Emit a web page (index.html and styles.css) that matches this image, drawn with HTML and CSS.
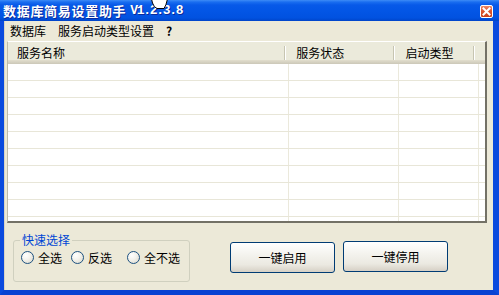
FILE: index.html
```html
<!DOCTYPE html>
<html lang="zh-CN">
<head>
    <meta charset="UTF-8">
    <meta name="viewport" content="width=device-width, initial-scale=1.0">
    <title>数据库简易设置助手</title>
    <link rel="stylesheet" href="styles.css">
</head>
<body>
    <div class="window">
        <div class="titlebar">
            <span class="title-cn">数据库简易设置助手</span>
            <span class="title-ver">V1.2.3.8</span>
            <span class="close-btn">
                <svg width="11" height="11" viewBox="0 0 11 11">
                    <path d="M2.5 2.5 L8.5 8.5 M8.5 2.5 L2.5 8.5" stroke="#fff" stroke-width="2" stroke-linecap="square"/>
                </svg>
            </span>
        </div>

        <!-- mouse pointer caught in the screenshot -->
        <svg class="cursor" width="20" height="10" viewBox="0 0 20 10">
            <path d="M1.5 -1 L2.5 3 Q4 7.5 7 8.5 L14 8.5 Q16 6 17.5 -1 Z" fill="#fff" stroke="#000" stroke-width="1"/>
        </svg>

        <div class="frame">
            <div class="menubar">
                <span class="menu-item">数据库</span>
                <span class="menu-item">服务启动类型设置</span>
                <span class="menu-item help">?</span>
            </div>

            <div class="listview">
                <div class="list-header">
                    <div class="col col-name">服务名称</div>
                    <div class="col col-state">服务状态</div>
                    <div class="col col-type">启动类型</div>
                    <div class="col col-fill"></div>
                </div>
                <div class="list-body">
                    <div class="row"><div class="cell col-name"></div><div class="cell col-state"></div><div class="cell col-type"></div></div>
                    <div class="row"><div class="cell col-name"></div><div class="cell col-state"></div><div class="cell col-type"></div></div>
                    <div class="row"><div class="cell col-name"></div><div class="cell col-state"></div><div class="cell col-type"></div></div>
                    <div class="row"><div class="cell col-name"></div><div class="cell col-state"></div><div class="cell col-type"></div></div>
                    <div class="row"><div class="cell col-name"></div><div class="cell col-state"></div><div class="cell col-type"></div></div>
                    <div class="row"><div class="cell col-name"></div><div class="cell col-state"></div><div class="cell col-type"></div></div>
                    <div class="row"><div class="cell col-name"></div><div class="cell col-state"></div><div class="cell col-type"></div></div>
                    <div class="row"><div class="cell col-name"></div><div class="cell col-state"></div><div class="cell col-type"></div></div>
                    <div class="row"><div class="cell col-name"></div><div class="cell col-state"></div><div class="cell col-type"></div></div>
                    <div class="row"><div class="cell col-name"></div><div class="cell col-state"></div><div class="cell col-type"></div></div>
                </div>
            </div>

            <div class="bottom">
                <fieldset class="quick">
                    <legend>快速选择</legend>
                    <label class="radio r-all"><span class="dot"></span>全选</label>
                    <label class="radio r-invert"><span class="dot"></span>反选</label>
                    <label class="radio r-none"><span class="dot"></span>全不选</label>
                </fieldset>
                <button class="btn">一键启用</button>
                <button class="btn">一键停用</button>
            </div>
        </div>
    </div>
</body>
</html>
```

FILE: styles.css
```css
body {
    margin: 0;
    font-family: "Noto Sans CJK SC", sans-serif;
    font-size: 12px;
    color: #000;
    background-color: #fff;
}

.window {
    position: relative;
    width: 499px;
    height: 295px;
    display: flex;
    flex-direction: column;
    overflow: hidden;
}

/* title bar */
.titlebar {
    height: 21px;
    flex-shrink: 0;
    display: flex;
    align-items: flex-start;
    padding-left: 3px;
    background: linear-gradient(to bottom, #3d8cf6 0, #1a6ef0 2px, #0759e8 5px, #0356e6 50%, #0152e0 85%, #0044c9 100%);
    color: #fff;
    font-weight: bold;
    line-height: 21px;
    text-shadow: 1px 1px 0 #0b2a9a;
}

.title-cn {
    font-size: 13px;
    letter-spacing: 0.7px;
}

.title-ver {
    margin-left: 4px;
    font-family: "Liberation Mono", monospace;
    font-size: 13px;
    letter-spacing: -1.3px;
}

.close-btn {
    margin-left: auto;
    margin-right: 6px;
    margin-top: 5px;
    width: 11px;
    height: 11px;
    border: 1px solid #fff;
    border-radius: 2px;
    background: linear-gradient(to bottom, #ee8a66, #dc5630 45%, #c9401b);
    display: flex;
}

.cursor {
    position: absolute;
    left: 150px;
    top: 0;
}

/* window body */
.frame {
    flex: 1;
    display: flex;
    flex-direction: column;
    background-color: #ece9d8;
    border-left: 4px solid #0a4ade;
    border-right: 6px solid #0a4ade;
    border-bottom: 5px solid #0842d2;
    box-shadow: inset 1px 0 0 #d8d4c4;
}

.menubar {
    height: 19px;
    line-height: 19px;
    display: flex;
}

.menu-item {
    padding: 0 6px;
}

.help {
    font-weight: bold;
}

/* list view */
.listview {
    margin: 1px 6px 0 3px;
    height: 179px;
    background-color: #fff;
    border-left: 1px solid #bdbaa9;
    border-top: 1px solid #fff;
    border-right: 2px solid #737166;
    border-bottom: 2px solid #737166;
    overflow: hidden;
}

.list-header {
    height: 22px;
    display: flex;
    background: linear-gradient(to bottom, #ebeadb 0, #ebeadb 18px, #e2decd 18px, #d6d2c2 20px, #cbc7b8 22px);
}

.col {
    box-sizing: border-box;
    display: flex;
    align-items: center;
    padding-left: 9px;
    padding-bottom: 1px;
}

.col::after {
    content: "";
    margin-left: auto;
    margin-right: 2px;
    width: 1px;
    height: 14px;
    background-color: #c7c5b2;
    box-shadow: 1px 0 0 #fff;
}

.col-name {
    width: 281px;
}

.col-state {
    width: 110px;
}

.col-type {
    width: 80px;
}

.col-fill {
    flex: 1;
}

.col-fill::after {
    display: none;
}

.list-body {
    height: 157px;
}

.row {
    height: 17px;
    box-sizing: border-box;
    display: flex;
    border-bottom: 1px solid #e8e6d8;
}

.cell {
    box-sizing: border-box;
    border-right: 1px solid #ebe9dc;
}

/* bottom controls */
.bottom {
    flex: 1;
    display: flex;
    align-items: flex-start;
    padding-left: 9px;
}

.quick {
    margin: 10px 0 0 0;
    width: 177px;
    height: 49px;
    box-sizing: border-box;
    padding: 4px 0 0 7px;
    border: 1px solid #d0d0bf;
    border-radius: 3px;
    display: flex;
    align-items: flex-start;
}

.quick legend {
    padding: 0 2px;
    margin-left: -1px;
    color: #0046d5;
    line-height: 14px;
}

.radio {
    display: flex;
    align-items: center;
    line-height: 13px;
}

.r-all {
    width: 50px;
}

.r-invert {
    width: 56px;
}

.dot {
    width: 11px;
    height: 11px;
    margin-right: 4px;
    border: 1px solid #1c5180;
    border-radius: 50%;
    background: radial-gradient(circle at 35% 30%, #fff 0, #f4f3ee 40%, #d9d6c9 100%);
}

.btn {
    width: 105px;
    height: 31px;
    margin-top: 18px;
    padding: 0;
    border: 1px solid #003c74;
    border-radius: 3px;
    background: linear-gradient(to bottom, #fff 0, #f4f3ee 40%, #ebe9e1 75%, #d6d0c5 100%);
    font-family: "Noto Sans CJK SC", sans-serif;
    font-size: 12px;
    color: #000;
}

.quick + .btn {
    margin-left: 40px;
    margin-top: 19px;
}

.btn + .btn {
    margin-left: 8px;
}
```
